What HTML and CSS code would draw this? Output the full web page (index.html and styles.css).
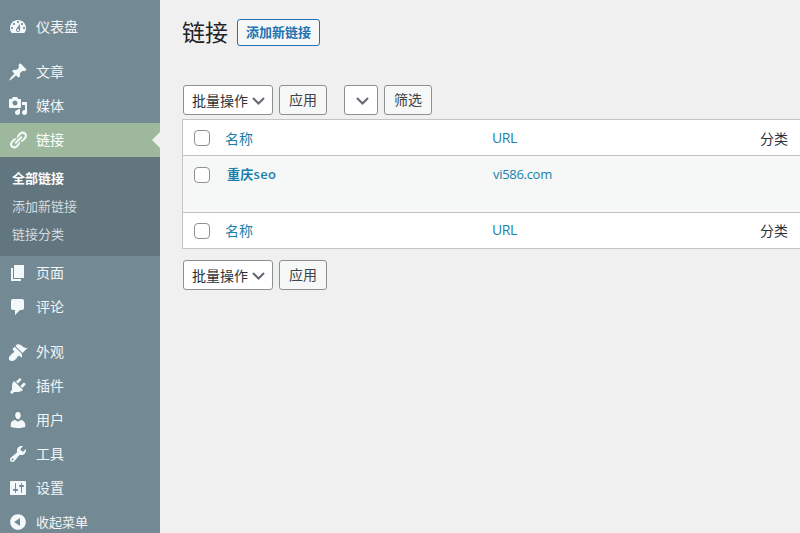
FILE: index.html
```html
<!DOCTYPE html>
<html lang="zh-CN">
<head>
    <meta charset="utf-8">
    <title>链接</title>
    <link rel="stylesheet" href="styles.css">
</head>
<body>
    <div class="layout">
        <!-- Admin menu -->
        <nav class="sidebar">
            <a class="menu-item" href="#">
                <svg class="menu-icon" viewBox="0 0 20 20"><path d="M3.76 16h12.48c1.1-1.37 1.76-3.11 1.76-5 0-4.42-3.58-8-8-8s-8 3.58-8 8c0 1.89.66 3.63 1.76 5zM10 4c.55 0 1 .45 1 1s-.45 1-1 1-1-.45-1-1 .45-1 1-1zM6 6c.55 0 1 .45 1 1s-.45 1-1 1-1-.45-1-1 .45-1 1-1zm8 0c.55 0 1 .45 1 1s-.45 1-1 1-1-.45-1-1 .45-1 1-1zm-5.37 5.55L12 7v6c0 1.1-.9 2-2 2s-2-.9-2-2c0-.57.24-1.08.63-1.45zM4 10c.55 0 1 .45 1 1s-.45 1-1 1-1-.45-1-1 .45-1 1-1zm12 0c.55 0 1 .45 1 1s-.45 1-1 1-1-.45-1-1 .45-1 1-1zm-5 3c0-.55-.45-1-1-1s-1 .45-1 1 .45 1 1 1 1-.45 1-1z"/></svg>
                <span class="menu-label">仪表盘</span>
            </a>
            <div class="menu-sep"></div>
            <a class="menu-item" href="#">
                <svg class="menu-icon" viewBox="0 0 20 20"><path d="M10.44 3.02l1.82-1.82 6.36 6.35-1.83 1.82c-1.05-.68-2.48-.57-3.41.36l-.75.75c-.92.93-1.04 2.35-.35 3.41l-1.83 1.82-2.41-2.41-2.8 2.79c-.42.42-3.38 2.71-3.8 2.29s1.86-3.39 2.28-3.81l2.79-2.79L4.1 9.36l1.83-1.82c1.05.69 2.48.57 3.4-.36l.75-.75c.93-.92 1.05-2.35.36-3.41z"/></svg>
                <span class="menu-label">文章</span>
            </a>
            <a class="menu-item" href="#">
                <svg class="menu-icon" viewBox="0 0 20 20"><path fill-rule="evenodd" d="M13 11V4c0-.55-.45-1-1-1h-1.67L9 1H5L3.67 3H2c-.55 0-1 .45-1 1v7c0 .55.45 1 1 1h10c.55 0 1-.45 1-1zM7 4.5c1.38 0 2.5 1.12 2.5 2.5S8.38 9.5 7 9.5 4.5 8.38 4.5 7 5.62 4.5 7 4.5zM14 6h5v10.5c0 1.38-1.12 2.5-2.5 2.5S14 17.88 14 16.5s1.12-2.5 2.5-2.5c.17 0 .34.02.5.05V9h-3V6zm-4 8.05V13h2v3.5c0 1.38-1.12 2.5-2.5 2.5S7 17.88 7 16.5 8.12 14 9.5 14c.17 0 .34.02.5.05z"/></svg>
                <span class="menu-label">媒体</span>
            </a>
            <a class="menu-item current" href="#">
                <svg class="menu-icon" viewBox="0 0 20 20"><path d="M17.74 2.76c1.68 1.69 1.68 4.41 0 6.1l-1.53 1.52c-1.12 1.12-2.7 1.49-4.14 1.12l2.62-2.61.76-.77.76-.76c.84-.84.84-2.2 0-3.04-.84-.85-2.2-.85-3.04 0l-.77.76-3.38 3.38c-.37-1.44 0-3.02 1.12-4.14l1.52-1.53c1.69-1.68 4.42-1.68 6.1 0zM8.59 13.43l5.34-5.34c.42-.42.42-1.1 0-1.52-.44-.43-1.13-.39-1.53 0l-5.33 5.34c-.42.42-.42 1.1 0 1.52.44.43 1.13.39 1.52 0zm-.76 2.29l4.14-4.15c.38 1.44 0 3.02-1.12 4.14l-1.52 1.53c-1.69 1.68-4.41 1.68-6.1 0-1.68-1.68-1.68-4.42 0-6.1l1.53-1.52c1.12-1.12 2.7-1.5 4.14-1.12l-4.14 4.14c-.85.84-.85 2.2 0 3.05.84.84 2.2.84 3.04 0z"/></svg>
                <span class="menu-label">链接</span>
            </a>
            <div class="submenu">
                <a class="submenu-item active" href="#">全部链接</a>
                <a class="submenu-item" href="#">添加新链接</a>
                <a class="submenu-item" href="#">链接分类</a>
            </div>
            <a class="menu-item" href="#">
                <svg class="menu-icon" viewBox="0 0 20 20"><path d="M6 15V2h10v13H6zm-1 1h8v2H3V5h2v11z"/></svg>
                <span class="menu-label">页面</span>
            </a>
            <a class="menu-item" href="#">
                <svg class="menu-icon" viewBox="0 0 20 20"><path d="M5 2h9c1.1 0 2 .9 2 2v7c0 1.1-.9 2-2 2h-2l-5 5v-5H5c-1.1 0-2-.9-2-2V4c0-1.1.9-2 2-2z"/></svg>
                <span class="menu-label">评论</span>
            </a>
            <div class="menu-sep"></div>
            <a class="menu-item" href="#">
                <svg class="menu-icon" viewBox="0 0 20 20"><path d="M14.48 11.06L7.41 3.99l1.5-1.5c.5-.56 2.3-.47 3.51.32 1.21.8 1.43 1.28 2.91 2.1 1.18.64 2.45 1.26 4.45.85zm-.71.71L6.7 4.7 4.93 6.47c-.39.39-.39 1.02 0 1.41l1.06 1.06c.39.39.39 1.03 0 1.42-.6.6-1.43 1.11-2.21 1.69-.35.26-.7.53-1.01.84C1.43 13.71 0 16.71 1.65 18.35c1.65 1.65 4.65.22 6.05-1.12.31-.31.58-.66.84-1.01.58-.78 1.09-1.61 1.69-2.21.39-.39 1.02-.39 1.41 0l1.06 1.06c.39.39 1.02.39 1.41 0z"/></svg>
                <span class="menu-label">外观</span>
            </a>
            <a class="menu-item" href="#">
                <svg class="menu-icon" viewBox="0 0 20 20"><path d="M13.11 4.36L9.87 7.6 8 5.73l3.24-3.24c.35-.34 1.05-.2 1.56.32.52.51.66 1.21.31 1.55zm-8 1.77l.91-1.12 9.01 9.01-1.19.84c-.71.71-2.63 1.16-3.82 1.16H6.14L4.9 17.26c-.59.59-1.54.59-2.12 0-.59-.58-.59-1.53 0-2.12l1.24-1.24v-3.88c0-1.13.4-3.19 1.09-3.89zm7.26 3.97l3.24-3.24c.34-.35 1.04-.21 1.55.31.52.51.66 1.21.31 1.55l-3.24 3.25z"/></svg>
                <span class="menu-label">插件</span>
            </a>
            <a class="menu-item" href="#">
                <svg class="menu-icon" viewBox="0 0 20 20"><path d="M10 9.25c-2.27 0-2.73-3.44-2.73-3.44C7 4.02 7.82 2 9.97 2c2.16 0 2.98 2.02 2.71 3.81 0 0-.41 3.44-2.68 3.44zm0 2.57L12.72 10c2.39 0 4.52 2.33 4.52 4.53v2.49s-3.65 1.13-7.24 1.13c-3.65 0-7.24-1.13-7.24-1.13v-2.49c0-2.25 1.94-4.48 4.47-4.48z"/></svg>
                <span class="menu-label">用户</span>
            </a>
            <a class="menu-item" href="#">
                <svg class="menu-icon" viewBox="0 0 20 20"><path fill-rule="evenodd" d="M16.68 9.77c-1.34 1.34-3.3 1.67-4.95.99l-5.41 6.52c-.99.99-2.59.99-3.58 0s-.99-2.59 0-3.57l6.52-5.42c-.68-1.65-.35-3.61.99-4.95 1.28-1.28 3.12-1.62 4.72-1.06l-2.89 2.89 2.82 2.82 2.86-2.87c.53 1.58.18 3.39-1.08 4.65zM3.81 16.21c.4.39 1.04.39 1.43 0 .4-.4.4-1.04 0-1.43-.39-.4-1.03-.4-1.43 0-.39.39-.39 1.03 0 1.43z"/></svg>
                <span class="menu-label">工具</span>
            </a>
            <a class="menu-item" href="#">
                <svg class="menu-icon" viewBox="0 0 20 20"><path fill-rule="evenodd" d="M18 16V4c0-.55-.45-1-1-1H3c-.55 0-1 .45-1 1v12c0 .55.45 1 1 1h14c.55 0 1-.45 1-1zM8 11h1c.55 0 1 .45 1 1s-.45 1-1 1H8v1.5c0 .28-.22.5-.5.5s-.5-.22-.5-.5V13H6c-.55 0-1-.45-1-1s.45-1 1-1h1V5.5c0-.28.22-.5.5-.5s.5.22.5.5V11zm5-2h-1c-.55 0-1-.45-1-1s.45-1 1-1h1V5.5c0-.28.22-.5.5-.5s.5.22.5.5V7h1c.55 0 1 .45 1 1s-.45 1-1 1h-1v5.5c0 .28-.22.5-.5.5s-.5-.22-.5-.5V9z"/></svg>
                <span class="menu-label">设置</span>
            </a>
            <a class="menu-item collapse" href="#">
                <svg class="menu-icon" viewBox="0 0 20 20"><path fill-rule="evenodd" d="M10 2.16c4.33 0 7.84 3.51 7.84 7.84s-3.51 7.84-7.84 7.84S2.16 14.33 2.16 10 5.71 2.16 10 2.16zm2 11.72V6.12L6.18 9.97z"/></svg>
                <span class="menu-label">收起菜单</span>
            </a>
        </nav>

        <!-- Link list -->
        <main class="content">
            <div class="heading">
                <h1>链接</h1>
                <a class="add-new" href="#">添加新链接</a>
            </div>

            <div class="tablenav top">
                <select class="dropdown bulk"><option>批量操作</option></select>
                <button class="btn" type="button">应用</button>
                <select class="dropdown empty"></select>
                <button class="btn" type="button">筛选</button>
            </div>

            <table class="links">
                <thead>
                    <tr>
                        <th class="check"><input type="checkbox"></th>
                        <th class="name"><a href="#">名称</a></th>
                        <th class="url"><a href="#">URL</a></th>
                        <th class="cat">分类</th>
                    </tr>
                </thead>
                <tbody>
                    <tr>
                        <td class="check"><input type="checkbox"></td>
                        <td class="name"><a href="#">重庆seo</a></td>
                        <td class="url"><a href="#">vi586.com</a></td>
                        <td class="cat"></td>
                    </tr>
                </tbody>
                <tfoot>
                    <tr>
                        <th class="check"><input type="checkbox"></th>
                        <th class="name"><a href="#">名称</a></th>
                        <th class="url"><a href="#">URL</a></th>
                        <th class="cat">分类</th>
                    </tr>
                </tfoot>
            </table>

            <div class="tablenav bottom">
                <select class="dropdown bulk"><option>批量操作</option></select>
                <button class="btn" type="button">应用</button>
            </div>
        </main>
    </div>
</body>
</html>
```

FILE: styles.css
```css
html, body {
    margin: 0;
    padding: 0;
    height: 100%;
    overflow: hidden;
}

body {
    font-family: "Open Sans", "Noto Sans CJK SC", sans-serif;
    font-size: 13px;
    background-color: #f0f0f0;
    color: #3c434a;
}

a {
    text-decoration: none;
}

.layout {
    display: flex;
    width: 800px;
    min-height: 100%;
}

/* Sidebar */
.sidebar {
    flex: 0 0 160px;
    width: 160px;
    padding-top: 10px;
    background-color: #738a94;
    display: flex;
    flex-direction: column;
}

.menu-item {
    position: relative;
    display: flex;
    align-items: center;
    flex: 0 0 34px;
    height: 34px;
    padding-left: 8px;
    font-size: 14px;
    color: #f3f5f6;
}

.menu-item.collapse {
    font-size: 13px;
}

.menu-label {
    margin-bottom: 2px;
}

.menu-icon {
    width: 20px;
    height: 20px;
    margin-right: 8px;
    fill: #f3f8fa;
    flex: none;
}

.menu-item.current {
    background-color: #9db89c;
    color: #ffffff;
}

/* small notch pointing at the page */
.menu-item.current::after {
    content: "";
    position: absolute;
    right: 0;
    top: 50%;
    margin-top: -8px;
    border: 8px solid transparent;
    border-right-color: #f0f0f0;
    border-left-width: 0;
}

.menu-sep {
    flex: 0 0 11px;
}

.submenu {
    flex: 0 0 99px;
    box-sizing: border-box;
    padding: 8px 0 7px;
    background-color: #62767f;
}

.submenu-item {
    display: block;
    height: 28px;
    line-height: 26px;
    padding-left: 12px;
    font-size: 13px;
    color: #d5dcdf;
}

.submenu-item.active {
    color: #ffffff;
    font-weight: 600;
}

/* Main area */
.content {
    flex: 0 0 620px;
    margin-left: 22px;
}

.heading {
    display: flex;
    align-items: center;
    height: 27px;
    margin-top: 19px;
}

h1 {
    margin: 0 9px 0 0;
    font-size: 23px;
    font-weight: 400;
    line-height: 27px;
    color: #1d2327;
}

.add-new {
    box-sizing: border-box;
    height: 27px;
    line-height: 25px;
    padding: 0 8px;
    border: 1px solid #2271b1;
    border-radius: 3px;
    background-color: #f6f7f7;
    color: #2271b1;
    font-size: 13px;
    font-weight: 700;
}

.tablenav {
    display: flex;
    align-items: center;
    height: 30px;
    padding-left: 1px;
}

.tablenav.top {
    margin: 39px 0 4px;
}

.tablenav.bottom {
    margin-top: 11px;
}

.dropdown {
    appearance: none;
    -webkit-appearance: none;
    box-sizing: border-box;
    height: 30px;
    padding: 0 24px 0 8px;
    border: 1px solid #8c8f94;
    border-radius: 3px;
    background: #ffffff url("data:image/svg+xml,%3Csvg xmlns='http://www.w3.org/2000/svg' width='13' height='8'%3E%3Cpath d='M1 1l5.5 5.5L12 1' fill='none' stroke='%23646970' stroke-width='2'/%3E%3C/svg%3E") no-repeat right 7px top 11px;
    font: 14px "Open Sans", "Noto Sans CJK SC", sans-serif;
    color: #2c3338;
}

.dropdown.bulk {
    width: 90px;
}

.dropdown.empty {
    width: 34px;
    margin-left: 17px;
    background-position: right 8px top 11px;
}

.btn {
    box-sizing: border-box;
    width: 48px;
    height: 30px;
    margin-left: 6px;
    padding: 0 0 2px;
    border: 1px solid #8c8f94;
    border-radius: 3px;
    background-color: #f6f7f7;
    color: #3c434a;
    font: 14px "Open Sans", "Noto Sans CJK SC", sans-serif;
}

/* List table */
.links {
    width: 620px;
    table-layout: fixed;
    border-collapse: separate;
    border-spacing: 0;
    border: 1px solid #c3c4c7;
    background-color: #ffffff;
}

.links th,
.links td {
    box-sizing: border-box;
    padding: 0;
    font-weight: 400;
    text-align: left;
}

.links thead th {
    height: 36px;
    border-bottom: 1px solid #c3c4c7;
}

.links tfoot th {
    height: 36px;
    border-top: 1px solid #c3c4c7;
}

.links tfoot th.name,
.links tfoot th.url,
.links tfoot th.cat {
    padding-bottom: 2px;
}

.links tbody td {
    height: 56px;
    padding-top: 8px;
    vertical-align: top;
    background-color: #f6f7f7;
}

.links th a,
.links td a {
    color: #1b7fab;
}

.links .check {
    width: 32px;
    padding-left: 11px;
}

.links tbody td.check {
    padding-top: 11px;
}

.links th.name {
    width: 267px;
    padding-left: 10px;
    font-size: 14px;
}

.links td.name {
    padding-left: 12px;
    font-weight: 600;
    letter-spacing: 0.3px;
}

.links th.url {
    width: 268px;
    padding-left: 10px;
    font-size: 14px;
}

.links th.url a {
    letter-spacing: -0.4px;
}

.links td.url {
    padding-left: 11px;
    padding-top: 9px;
    letter-spacing: -0.3px;
}

.links th.cat {
    padding-left: 10px;
    font-size: 14px;
    color: #2c3338;
}

.links input[type="checkbox"] {
    appearance: none;
    -webkit-appearance: none;
    display: block;
    box-sizing: border-box;
    width: 16px;
    height: 16px;
    margin: 0;
    border: 1px solid #8c8f94;
    border-radius: 4px;
    background-color: #ffffff;
}
```
